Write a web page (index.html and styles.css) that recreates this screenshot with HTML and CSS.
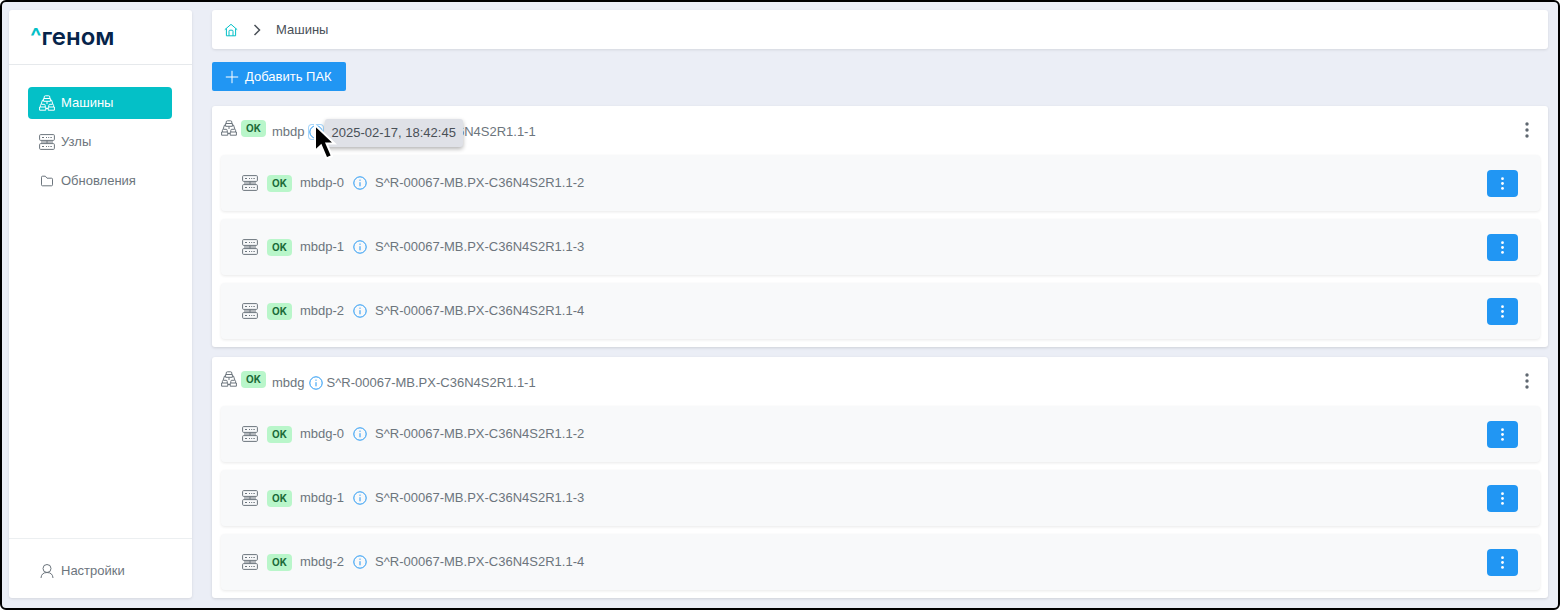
FILE: index.html
```html
<!DOCTYPE html>
<html lang="ru">
<head>
    <meta charset="UTF-8">
    <meta name="viewport" content="width=device-width, initial-scale=1.0">
    <title>Машины</title>
    <link rel="stylesheet" href="styles.css">
</head>
<body>

    <svg class="sprite" aria-hidden="true">
        <symbol id="icon-cluster" viewBox="0 0 16 16">
            <path d="M5.200 3.500V2Q5.200 .8 6.400 .8H9.600Q10.800 .8 10.800 2V3.500M4.600 3.500H11.400V6.300H4.600ZM4.600 5H3.500L2.200 9M11.400 5H12.500L13.800 9M1.400 12V10.300Q1.400 9.300 2.400 9.300H5.200Q6.200 9.300 6.200 10.300V12M9.800 12V10.300Q9.800 9.300 10.800 9.300H13.600Q14.600 9.300 14.600 10.300V12M.6 12H6.800V15.200H.6ZM9.200 12H15.400V15.200H9.200ZM6.800 13.500H9.200M8 6.300V9"/>
        </symbol>
        <symbol id="icon-server" viewBox="0 0 16 16">
            <rect x=".6" y=".6" width="14.800" height="5.800" rx="1"/>
            <rect x=".6" y="9.600" width="14.800" height="5.800" rx="1"/>
            <path d="M3 3.500H5M7 3.500H8M9.200 3.500H10.200M11.400 3.500H12.800M3 12.500H5M7 12.500H8M9.200 12.500H10.200M11.400 12.500H12.800M8 6.400V9.600M2 8H14"/>
        </symbol>
        <symbol id="icon-folder" viewBox="0 0 16 16">
            <path d="M2.500 4.200Q2.500 3.200 3.500 3.200H6.300L8 5.200H12.500Q13.500 5.200 13.500 6.200V11.800Q13.500 12.800 12.500 12.800H3.500Q2.500 12.800 2.500 11.800Z"/>
        </symbol>
        <symbol id="icon-user" viewBox="0 0 16 16">
            <circle cx="8" cy="5.500" r="4"/>
            <path d="M2 15C2.200 11.500 4.200 9.500 8 9.500S13.800 11.500 14 15"/>
        </symbol>
        <symbol id="icon-home" viewBox="0 0 14 14">
            <path d="M.8 6.700 7 1.300 13.200 6.700M2.400 5.500V12.800H11.600V5.500M5 12.800V8.200Q5 7.200 6 7.200H8Q9 7.200 9 8.200V12.800"/>
        </symbol>
        <symbol id="icon-info" viewBox="0 0 14 14">
            <circle cx="7" cy="7" r="6.200"/>
            <path d="M7 6.200V10.300M7 3.600V4.800"/>
        </symbol>
        <symbol id="icon-dots" viewBox="0 0 16 16">
            <circle cx="8" cy="2" r="1.700"/>
            <circle cx="8" cy="8" r="1.700"/>
            <circle cx="8" cy="14" r="1.700"/>
        </symbol>
    </svg>

    <div class="app">
        <aside class="sidebar">
            <div class="logo"><span class="logo-mark">^</span>геном</div>
            <nav class="menu">
                <a href="#machines" class="menu-item active"><svg class="icon"><use href="#icon-cluster"/></svg>Машины</a>
                <a href="#nodes" class="menu-item"><svg class="icon"><use href="#icon-server"/></svg>Узлы</a>
                <a href="#updates" class="menu-item"><svg class="icon"><use href="#icon-folder"/></svg>Обновления</a>
            </nav>
            <div class="sidebar-footer">
                <a href="#settings" class="menu-item"><svg class="icon"><use href="#icon-user"/></svg>Настройки</a>
            </div>
        </aside>

        <main class="content">
            <nav class="breadcrumb" aria-label="breadcrumb">
                <a href="#home" class="home-link" aria-label="Главная"><svg class="icon-small"><use href="#icon-home"/></svg></a>
                <svg class="chevron" viewBox="0 0 8 12"><path d="M1.500 1 6.500 6 1.500 11"/></svg>
                <span>Машины</span>
            </nav>

            <button type="button" class="add-button">
                <svg class="icon-small" viewBox="0 0 14 14"><path d="M7 .8V13.200M.8 7H13.200"/></svg>
                Добавить ПАК
            </button>

            <section class="card">
                <header class="card-header">
                    <svg class="icon"><use href="#icon-cluster"/></svg>
                    <span class="badge">OK</span>
                    <div class="card-title">
                        <span>mbdp</span>
                        <span class="info-wrap">
                            <button type="button" class="info-button focused" aria-label="Информация"><svg class="icon-small"><use href="#icon-info"/></svg></button>
                            <span class="tooltip" role="tooltip">2025-02-17, 18:42:45</span>
                            <svg class="cursor" viewBox="0 0 24 38"><path d="M2 2V28L8 22.500 13.500 35.500 19 33 13.500 20.500H21.500Z"/></svg>
                        </span>
                        <span>S^R-00067-MB.PX-C36N4S2R1.1-1</span>
                    </div>
                    <button type="button" class="more-plain" aria-label="Меню"><svg class="icon"><use href="#icon-dots"/></svg></button>
                </header>
                <ul class="node-list">
                    <li class="node">
                        <svg class="icon"><use href="#icon-server"/></svg>
                        <span class="badge">OK</span>
                        <span class="node-name">mbdp-0</span>
                        <button type="button" class="info-button" aria-label="Информация"><svg class="icon-small"><use href="#icon-info"/></svg></button>
                        <span>S^R-00067-MB.PX-C36N4S2R1.1-2</span>
                        <button type="button" class="more-button" aria-label="Меню"><svg class="dots"><use href="#icon-dots"/></svg></button>
                    </li>
                    <li class="node">
                        <svg class="icon"><use href="#icon-server"/></svg>
                        <span class="badge">OK</span>
                        <span class="node-name">mbdp-1</span>
                        <button type="button" class="info-button" aria-label="Информация"><svg class="icon-small"><use href="#icon-info"/></svg></button>
                        <span>S^R-00067-MB.PX-C36N4S2R1.1-3</span>
                        <button type="button" class="more-button" aria-label="Меню"><svg class="dots"><use href="#icon-dots"/></svg></button>
                    </li>
                    <li class="node">
                        <svg class="icon"><use href="#icon-server"/></svg>
                        <span class="badge">OK</span>
                        <span class="node-name">mbdp-2</span>
                        <button type="button" class="info-button" aria-label="Информация"><svg class="icon-small"><use href="#icon-info"/></svg></button>
                        <span>S^R-00067-MB.PX-C36N4S2R1.1-4</span>
                        <button type="button" class="more-button" aria-label="Меню"><svg class="dots"><use href="#icon-dots"/></svg></button>
                    </li>
                </ul>
            </section>

            <section class="card">
                <header class="card-header">
                    <svg class="icon"><use href="#icon-cluster"/></svg>
                    <span class="badge">OK</span>
                    <div class="card-title">
                        <span>mbdg</span>
                        <span class="info-wrap">
                            <button type="button" class="info-button" aria-label="Информация"><svg class="icon-small"><use href="#icon-info"/></svg></button>
                        </span>
                        <span>S^R-00067-MB.PX-C36N4S2R1.1-1</span>
                    </div>
                    <button type="button" class="more-plain" aria-label="Меню"><svg class="icon"><use href="#icon-dots"/></svg></button>
                </header>
                <ul class="node-list">
                    <li class="node">
                        <svg class="icon"><use href="#icon-server"/></svg>
                        <span class="badge">OK</span>
                        <span class="node-name">mbdg-0</span>
                        <button type="button" class="info-button" aria-label="Информация"><svg class="icon-small"><use href="#icon-info"/></svg></button>
                        <span>S^R-00067-MB.PX-C36N4S2R1.1-2</span>
                        <button type="button" class="more-button" aria-label="Меню"><svg class="dots"><use href="#icon-dots"/></svg></button>
                    </li>
                    <li class="node">
                        <svg class="icon"><use href="#icon-server"/></svg>
                        <span class="badge">OK</span>
                        <span class="node-name">mbdg-1</span>
                        <button type="button" class="info-button" aria-label="Информация"><svg class="icon-small"><use href="#icon-info"/></svg></button>
                        <span>S^R-00067-MB.PX-C36N4S2R1.1-3</span>
                        <button type="button" class="more-button" aria-label="Меню"><svg class="dots"><use href="#icon-dots"/></svg></button>
                    </li>
                    <li class="node">
                        <svg class="icon"><use href="#icon-server"/></svg>
                        <span class="badge">OK</span>
                        <span class="node-name">mbdg-2</span>
                        <button type="button" class="info-button" aria-label="Информация"><svg class="icon-small"><use href="#icon-info"/></svg></button>
                        <span>S^R-00067-MB.PX-C36N4S2R1.1-4</span>
                        <button type="button" class="more-button" aria-label="Меню"><svg class="dots"><use href="#icon-dots"/></svg></button>
                    </li>
                </ul>
            </section>
        </main>
    </div>

</body>
</html>
```
FILE: styles.css
```css
* {
    box-sizing: border-box;
}
body {
    margin: 0;
    padding: 0 4px 4px 0;
    background-color: white;
    font-family: "Liberation Sans", Arial, sans-serif;
    font-size: 13px;
    line-height: 16px;
    color: #6c757d;
}
button {
    font: inherit;
    border: none;
    background: none;
    padding: 0;
    cursor: pointer;
}
a {
    color: inherit;
    text-decoration: none;
}
svg {
    display: block;
    flex-shrink: 0;
    fill: none;
    stroke: currentColor;
}
.sprite {
    position: absolute;
    width: 0;
    height: 0;
}
.icon {
    width: 16px;
    height: 16px;
}
.icon-small {
    width: 14px;
    height: 14px;
}

.app {
    display: flex;
    gap: 20px;
    min-height: calc(100vh - 4px);
    padding: 8px 10px 10px 7px;
    border: 2px solid black;
    border-radius: 6px;
    background-color: #ebeef6;
}

/* Sidebar */
.sidebar {
    display: flex;
    flex-direction: column;
    flex: 0 0 183px;
    background-color: white;
    border-radius: 3px;
    box-shadow: 0 1px 3px rgba(0, 0, 0, 0.1);
}
.logo {
    height: 55px;
    padding: 14px 21px;
    border-bottom: 1px solid #e6e9ec;
    font-family: Inter, "Liberation Sans", sans-serif;
    font-size: 24px;
    line-height: 26px;
    font-weight: 600;
    color: #06244a;
}
.logo-mark {
    color: #04c0c7;
}
.menu {
    display: flex;
    flex-direction: column;
    gap: 7px;
    padding: 22px 20px 22px 19px;
}
.menu-item {
    display: flex;
    align-items: center;
    gap: 6px;
    height: 32px;
    padding: 0 11px;
    border-radius: 4px;
}
.menu-item.active {
    background-color: #04c0c7;
    color: white;
}
.sidebar-footer {
    margin-top: auto;
    padding: 16px 20px 11px 19px;
    border-top: 1px solid #eceff1;
}

/* Content */
.content {
    flex: 1;
    min-width: 0;
}
.breadcrumb {
    display: flex;
    align-items: center;
    height: 39px;
    padding: 0 12px;
    margin-bottom: 13px;
    background-color: white;
    border-radius: 3px;
    box-shadow: 0 1px 3px rgba(0, 0, 0, 0.1);
    color: #495057;
}
.home-link {
    color: #04c0c7;
}
.chevron {
    width: 8px;
    height: 12px;
    margin: 0 15px;
    stroke-width: 1.5;
}
.add-button {
    display: flex;
    align-items: center;
    gap: 6px;
    height: 29px;
    padding: 0 14px 0 13px;
    margin-bottom: 15px;
    border-radius: 2px;
    background-color: #2196f3;
    color: white;
}
.card {
    padding: 0 8px 8px 9px;
    background-color: white;
    border-radius: 3px;
    box-shadow: 0 1px 3px rgba(0, 0, 0, 0.12);
}
.card + .card {
    margin-top: 10px;
}
.card-header {
    display: flex;
    align-items: flex-start;
    height: 49px;
    padding-top: 14px;
}
.card-title {
    display: flex;
    align-items: center;
    gap: 4px;
    margin: 4px 0 0 6px;
}
.badge {
    width: 25px;
    height: 17px;
    margin-left: 4px;
    border-radius: 4px;
    background-color: #b9f6ca;
    color: #1b6b38;
    font-family: Inter, "Liberation Sans", sans-serif;
    font-size: 10px;
    line-height: 17px;
    font-weight: bold;
    text-align: center;
}
.node-list {
    display: flex;
    flex-direction: column;
    gap: 8px;
    margin: 0;
    padding: 0;
    list-style: none;
}
.node {
    display: flex;
    align-items: center;
    height: 56px;
    padding: 0 22px 0 21px;
    border-radius: 4px;
    background-color: #f8f9fa;
    box-shadow: 0 1px 3px rgba(0, 0, 0, 0.09);
}
.node .badge {
    margin: 0 8px 0 9px;
}
.node .info-button {
    margin: 0 8px 0 9px;
}
.info-wrap {
    position: relative;
}
.info-button {
    display: block;
    color: #2196f3;
}
.info-button.focused {
    border-radius: 3px;
    box-shadow: 0 0 0 1px #a6d5fa;
}
.more-plain {
    margin: 2px 5px 0 auto;
    color: #5f6770;
}
.more-plain svg,
.more-button svg {
    fill: currentColor;
    stroke: none;
}
.more-button {
    display: flex;
    align-items: center;
    justify-content: center;
    width: 31px;
    height: 27px;
    margin-left: auto;
    border-radius: 4px;
    background-color: #2196f3;
    color: white;
}
.dots {
    width: 13px;
    height: 13px;
}

/* Tooltip and pointer over the info icon */
.tooltip {
    position: absolute;
    top: -6px;
    left: 16px;
    padding: 6px 7px;
    border-radius: 3px;
    background-color: #dfe1e7;
    box-shadow: 0 2px 4px rgba(0, 0, 0, 0.3);
    color: #495057;
    white-space: nowrap;
}
.cursor {
    position: absolute;
    top: -2px;
    left: 4px;
    width: 24px;
    height: 38px;
    fill: black;
    stroke: white;
    stroke-width: 2;
}
```
